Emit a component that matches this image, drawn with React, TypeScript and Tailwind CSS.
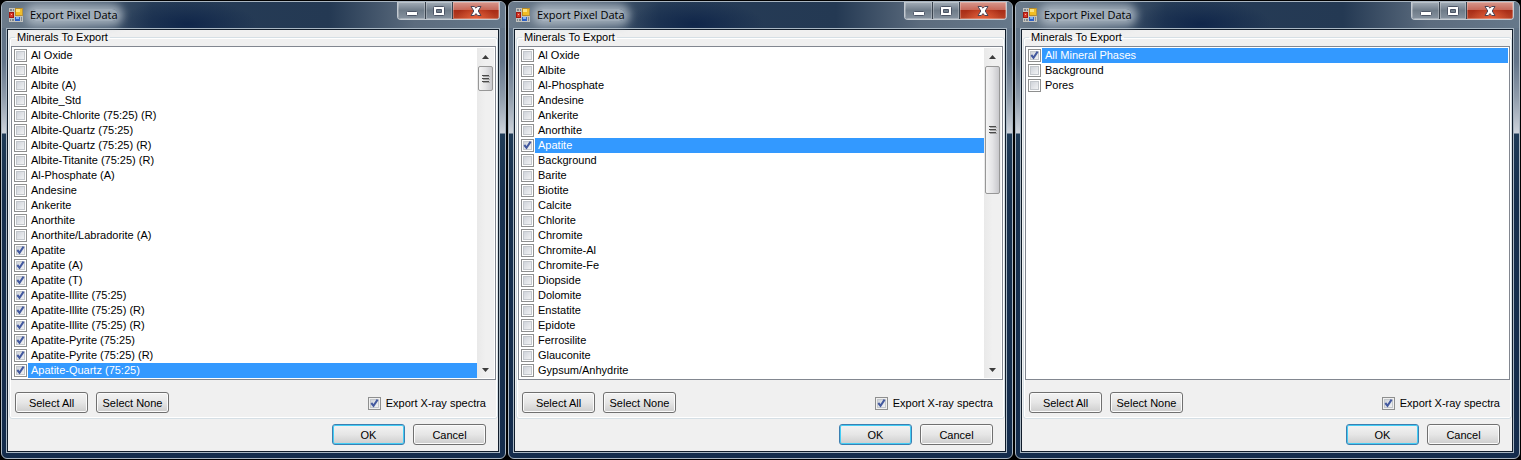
import React, { useState } from 'react';

type ScrollKind = 'short' | 'long' | 'none';

type DialogData = {
  id: string;
  items: string[];
  checkedFrom: number;
  checkedTo: number;
  selected: number;
  scroll: ScrollKind;
};

const dialogs: DialogData[] = [
  {
    id: 'variants',
    items: [
      'Al Oxide', 'Albite', 'Albite (A)', 'Albite_Std', 'Albite-Chlorite (75:25) (R)', 'Albite-Quartz (75:25)',
      'Albite-Quartz (75:25) (R)', 'Albite-Titanite (75:25) (R)', 'Al-Phosphate (A)', 'Andesine', 'Ankerite',
      'Anorthite', 'Anorthite/Labradorite (A)', 'Apatite', 'Apatite (A)', 'Apatite (T)', 'Apatite-Illite (75:25)',
      'Apatite-Illite (75:25) (R)', 'Apatite-Illite (75:25) (R)', 'Apatite-Pyrite (75:25)',
      'Apatite-Pyrite (75:25) (R)', 'Apatite-Quartz (75:25)',
    ],
    checkedFrom: 13,
    checkedTo: 21,
    selected: 21,
    scroll: 'short',
  },
  {
    id: 'minerals',
    items: [
      'Al Oxide', 'Albite', 'Al-Phosphate', 'Andesine', 'Ankerite', 'Anorthite', 'Apatite', 'Background', 'Barite',
      'Biotite', 'Calcite', 'Chlorite', 'Chromite', 'Chromite-Al', 'Chromite-Fe', 'Diopside', 'Dolomite',
      'Enstatite', 'Epidote', 'Ferrosilite', 'Glauconite', 'Gypsum/Anhydrite',
    ],
    checkedFrom: 6,
    checkedTo: 6,
    selected: 6,
    scroll: 'long',
  },
  {
    id: 'phases',
    items: ['All Mineral Phases', 'Background', 'Pores'],
    checkedFrom: 0,
    checkedTo: 0,
    selected: 0,
    scroll: 'none',
  },
];

function AppIcon() {
  return (
    <svg width="14" height="14" viewBox="0 0 14 14" aria-hidden="true" shapeRendering="crispEdges" className="shrink-0">
      <rect width="14" height="14" fill="#c3c3be" />
      <rect x="1" y="1" width="2" height="2" fill="#7d858d" />
      <rect x="4" y="1" width="1" height="2" fill="#7d858d" />
      <rect x="0" y="4" width="5" height="6" fill="#a01810" />
      <rect x="1" y="5" width="3" height="4" fill="#d8382a" />
      <rect x="2" y="6" width="1" height="1" fill="#ffb0a0" />
      <rect x="6" y="0" width="8" height="8" fill="#b98a22" />
      <rect x="7" y="1" width="6" height="6" fill="#f5bd1c" />
      <rect x="7" y="1" width="4" height="3" fill="#ffe47a" />
      <rect x="6" y="9" width="5" height="4" fill="#2c5fc4" />
      <rect x="7" y="9" width="3" height="2" fill="#82b4f5" />
      <rect x="1" y="11" width="1" height="2" fill="#7d858d" />
      <rect x="3" y="11" width="2" height="2" fill="#7d858d" />
      <rect x="12" y="9" width="1" height="4" fill="#7d858d" />
    </svg>
  );
}

function CheckBox({ id, checked, onChange }: { id: string; checked: boolean; onChange: () => void }) {
  return (
    <span className="relative block size-[13px] shrink-0">
      <input
        id={id}
        type="checkbox"
        checked={checked}
        onChange={onChange}
        className="block size-[13px] appearance-none border border-[#8e8f8f] bg-[#f4f4f4] bg-linear-to-br from-[#c6cbd3] to-[#fbfbfb] bg-clip-content p-px"
      />
      <svg className="pointer-events-none absolute inset-0" width="13" height="13" viewBox="0 0 13 13" aria-hidden="true">
        <rect x="2.5" y="2.5" width="8" height="8" fill="none" stroke="#c3c7cc" />
        {checked && <path d="M3.3 6 L5.5 8.7 L9.6 2.6" fill="none" stroke="#43599f" strokeWidth="2" />}
      </svg>
    </span>
  );
}

function PushButton({ children, primary = false, onClick }: { children: string; primary?: boolean; onClick?: () => void }) {
  const edge = primary
    ? 'border-[#3c7fb1] shadow-[inset_0_0_0_1px_#43cdf5]'
    : 'border-[#707070] shadow-[inset_0_0_0_1px_#fbfbfb]';
  return (
    <button
      type="button"
      onClick={onClick}
      className={`h-[21px] w-[73px] rounded-[3px] border bg-linear-to-b from-[#f3f3f3] from-0% via-[#e6e6e6] via-50% to-[#cdcdcd] leading-[18px] ${edge}`}
    >
      {children}
    </button>
  );
}

function ScrollBar({ kind }: { kind: 'short' | 'long' }) {
  return (
    <div className="flex w-[17px] shrink-0 flex-col bg-linear-to-r from-[#e9e9e9] via-[#f0f0f0] to-[#f0f0f0] px-px">
      <button type="button" aria-label="Scroll up" className="flex h-[18px] items-center justify-center">
        <svg width="7" height="4" viewBox="0 0 7 4" aria-hidden="true"><path d="M3.5 0 L7 4 H0 Z" fill="#3c3c3c" /></svg>
      </button>
      <div
        className={`flex items-center justify-center rounded-[2px] border border-[#979797] bg-linear-to-r from-[#f5f5f5] via-[#e4e4e6] to-[#c8c8cc] ${kind === 'short' ? 'h-[25px]' : 'h-32'}`}
      >
        <svg width="8" height="8" viewBox="0 0 8 8" aria-hidden="true" shapeRendering="crispEdges">
          <path d="M0 0.5H7 M0 3.5H7 M0 6.5H7" stroke="#4a4a4a" />
          <path d="M1 1.5H8 M1 4.5H8 M1 7.5H8" stroke="#a4a4a4" />
        </svg>
      </div>
      <div className="flex-1" />
      <button type="button" aria-label="Scroll down" className="flex h-[17px] items-center justify-center">
        <svg width="7" height="4" viewBox="0 0 7 4" aria-hidden="true"><path d="M0 0 H7 L3.5 4 Z" fill="#3c3c3c" /></svg>
      </button>
    </div>
  );
}

function WindowControls() {
  const glass =
    'bg-linear-to-b from-[#a5afb9] from-0% via-[#6f7c89] via-50% to-[#8793a0] shadow-[inset_0_0_0_1px_#ffffff44]';
  return (
    <div className="flex h-[18px] overflow-hidden rounded-b-[4px] border border-t-0 border-[#c3cad1]">
      <button type="button" aria-label="Minimize" className={`flex w-7 items-center justify-center border-r border-[#39434e] ${glass}`}>
        <svg width="12" height="12" viewBox="0 0 12 12" aria-hidden="true"><rect x="0.5" y="6.5" width="11" height="4" rx="1" fill="#fff" stroke="#4c5566" /></svg>
      </button>
      <button type="button" aria-label="Maximize" className={`flex w-[27px] items-center justify-center border-r border-[#39434e] ${glass}`}>
        <svg width="12" height="10" viewBox="0 0 12 10" aria-hidden="true">
          <path fillRule="evenodd" d="M1.5 0.5H10.5Q11.5 .5 11.5 1.5V8.5Q11.5 9.5 10.5 9.5H1.5Q.5 9.5 .5 8.5V1.5Q.5 .5 1.5 .5Z M3.5 3.5V6.5H8.5V3.5Z" fill="#fff" stroke="#4c5566" />
        </svg>
      </button>
      <button
        type="button"
        aria-label="Close"
        className="flex w-[46px] items-center justify-center bg-[radial-gradient(ellipse_at_bottom,#e5603a_0%,transparent_60%),linear-gradient(#d8988d_0%,#c56a5c_45%,#a92c16_50%,#b84428_100%)] shadow-[inset_0_0_0_1px_#ffffff44]"
      >
        <svg width="12" height="10" viewBox="0 0 12 10" aria-hidden="true">
          <path d="M1 .5H4.3L6 2.2L7.7 .5H11L8.2 5L11 9.5H7.7L6 7.6L4.3 9.5H1L3.8 5Z" fill="#fff" stroke="#4c4556" strokeLinejoin="round" />
        </svg>
      </button>
    </div>
  );
}

function ExportDialog({ data }: { data: DialogData }) {
  const [checks, setChecks] = useState(() => data.items.map((_, i) => i >= data.checkedFrom && i <= data.checkedTo));
  const [spectra, setSpectra] = useState(true);
  const toggle = (index: number) => setChecks((prev) => prev.map((c, i) => (i === index ? !c : c)));

  return (
    <section className="min-w-0 overflow-hidden rounded-[6px] border border-[#a9b5c0] bg-[linear-gradient(#5f7182_0px,#63758a_60px,#8f9cab_95px,#cdd3db_131px,#1f3b57_132px,#17304e_200px,#142c4c_100%)]">
      <header className="flex h-[26px] items-start bg-[radial-gradient(ellipse_70px_24px_at_185px_22px,#10264a_0%,transparent_100%),linear-gradient(to_right,#6b7b8b_0px,#5a6b7d_60px,#263c57_150px,#243953_65%,#5c6c7e_82%,#66788a_100%)] pl-[7px] pr-[5px]">
        <div className="flex h-[26px] min-w-0 flex-1 items-center gap-[7px]">
          <AppIcon />
          <h2 className="rounded-full bg-[#bcc7d0]/75 font-['Open_Sans',sans-serif] text-[11px] leading-[12px] text-black shadow-[0_0_8px_5px_#bcc7d0bf]">
            Export Pixel Data
          </h2>
        </div>
        <WindowControls />
      </header>
      <div className="mb-[5px] ml-1 mr-[5px] border border-[#a9b7c3]">
        <form className="border border-[#101c2a] bg-[#f0f0f0] pb-[6px] pl-px pt-px">
          <fieldset className="min-w-0 rounded-[3px] border border-[#d5dfe5] px-px pb-[5px] shadow-[inset_0_0_0_1px_#ffffff]">
            <legend className="ml-1 px-[2px] leading-[13px]">Minerals To Export</legend>
            <div className="mt-[2px] flex h-[334px] border border-[#828790] bg-white py-px pl-[2px] pr-px">
              <ul className="min-w-0 flex-1">
                {data.items.map((item, i) => {
                  const id = `${data.id}-${i}`;
                  return (
                    <li key={id} className="flex h-[15px] items-center gap-px">
                      <CheckBox id={id} checked={checks[i]} onChange={() => toggle(i)} />
                      <label
                        htmlFor={id}
                        className={`min-w-0 flex-1 truncate pl-[3px] leading-[15px] ${i === data.selected ? 'bg-[#3399ff] text-white' : ''}`}
                      >
                        {item}
                      </label>
                    </li>
                  );
                })}
              </ul>
              {data.scroll !== 'none' && <ScrollBar kind={data.scroll} />}
            </div>
            <div className="mt-3 flex items-center gap-2 pl-1 pr-[10px]">
              <PushButton onClick={() => setChecks(data.items.map(() => true))}>Select All</PushButton>
              <PushButton onClick={() => setChecks(data.items.map(() => false))}>Select None</PushButton>
              <div className="ml-auto flex items-center gap-[5px] pt-[2px]">
                <CheckBox id={`${data.id}-spectra`} checked={spectra} onChange={() => setSpectra(!spectra)} />
                <label htmlFor={`${data.id}-spectra`} className="leading-[15px]">Export X-ray spectra</label>
              </div>
            </div>
          </fieldset>
          <div className="mt-[5px] flex justify-end gap-2 pr-3">
            <PushButton primary>OK</PushButton>
            <PushButton>Cancel</PushButton>
          </div>
        </form>
      </div>
    </section>
  );
}

export default function App() {
  return (
    <main className="min-h-screen bg-black py-px font-['Liberation_Sans',Arial,sans-serif] text-[11px] text-black">
      <div className="grid grid-cols-3 items-start gap-[2px] px-px">
        {dialogs.map((d) => (
          <ExportDialog key={d.id} data={d} />
        ))}
      </div>
    </main>
  );
}
